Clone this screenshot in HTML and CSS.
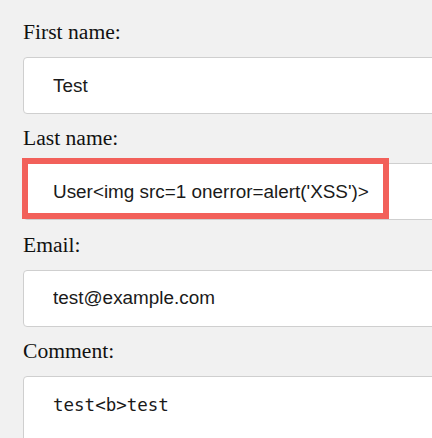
FILE: index.html
```html
<!DOCTYPE html>
<html>
<head>
<meta charset="utf-8">
<link rel="stylesheet" href="styles.css">
</head>
<body>
<form class="form">
  <div class="field">
    <label class="label">First name:</label>
    <input class="input" type="text" value="Test">
  </div>
  <div class="field">
    <label class="label">Last name:</label>
    <div class="wrap">
      <input class="input" type="text" value="User&lt;img src=1 onerror=alert('XSS')&gt;">
      <div class="highlight"></div>
    </div>
  </div>
  <div class="field">
    <label class="label">Email:</label>
    <input class="input" type="text" value="test@example.com">
  </div>
  <div class="field">
    <label class="label">Comment:</label>
    <textarea class="textarea">test&lt;b&gt;test</textarea>
  </div>
</form>
</body>
</html>
```
FILE: styles.css
```css
html, body {
  margin: 0;
  padding: 0;
  background: #f1f1f1;
  overflow: hidden;
}
.form {
  box-sizing: border-box;
  width: 432px;
  height: 438px;
  overflow: hidden;
  padding: 20px 0 0 23px;
}
.field {
  margin-bottom: 12.3px;
}
.label {
  display: block;
  font-family: "Liberation Serif", "Times New Roman", serif;
  font-size: 21.6px;
  line-height: 24px;
  color: #111;
  margin-bottom: 13px;
}
.wrap {
  position: relative;
}
.input, .textarea {
  display: block;
  box-sizing: border-box;
  width: 430px;
  height: 57px;
  margin: 0;
  border: 1px solid #cfcfcf;
  border-radius: 4px;
  background: #fff;
  padding: 0 10px 0 29px;
  font-family: "Liberation Sans", Arial, sans-serif;
  font-size: 18.9px;
  color: #1a1a1a;
  outline: none;
}
.textarea {
  height: 120px;
  padding: 18px 10px 0 29px;
  font-family: "DejaVu Sans Mono", monospace;
  font-size: 17.5px;
  line-height: 1.164;
  resize: none;
}
.highlight {
  position: absolute;
  left: -1px;
  top: -5px;
  width: 367px;
  height: 61px;
  box-sizing: border-box;
  border: 6px solid #f2605a;
  pointer-events: none;
}
```
